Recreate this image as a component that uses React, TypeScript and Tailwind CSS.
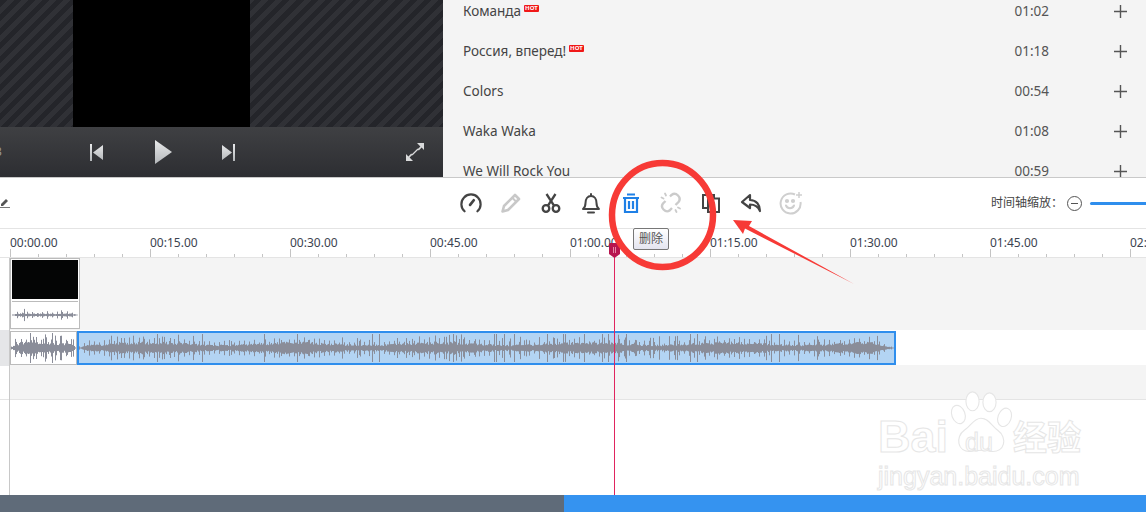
const songs = [
  { name: "Команда", time: "01:02", hot: true },
  { name: "Россия, вперед!", time: "01:18", hot: true },
  { name: "Colors", time: "00:54", hot: false },
  { name: "Waka Waka", time: "01:08", hot: false },
  { name: "We Will Rock You", time: "00:59", hot: false },
];

const rulerLabels = ["00:00.00", "00:15.00", "00:30.00", "00:45.00", "01:00.00", "01:15.00", "01:30.00", "01:45.00", "02:00.00"];

function noise(i: number, seed: number) {
  const v = Math.sin(i * 12.9898 + seed * 78.233) * 43758.5453;
  return v - Math.floor(v);
}

function Wave({ width, height, seed, gain = 1, fade = 0 }: { width: number; height: number; seed: number; gain?: number; fade?: number }) {
  const mid = height / 2;
  let d = "";
  for (let x = 0; x < width; x++) {
    const n = noise(x, seed);
    const slow = 0.8 + 0.25 * Math.sin(x / 23 + seed);
    let amp = (3.2 + n * 3) * slow;
    if (x % 5 === 0) amp += 2 + noise(x + 300, seed) * 3.5;
    if (noise(x + 500, seed) > 0.91) amp += 4 + noise(x + 900, seed) * 8;
    if (fade && x > width - fade) amp *= Math.max(0.1, (width - x) / fade);
    if (fade && x < 10) amp *= 0.2 + x / 12;
    amp = Math.min(amp * gain, mid - 1);
    d += `M${x + 0.5} ${(mid - amp).toFixed(1)}V${(mid + amp).toFixed(1)}`;
  }
  return (
    <svg width={width} height={height} className="block shrink-0">
      <path d={d} stroke="#8a8d99" strokeWidth="1" fill="none" />
    </svg>
  );
}

function ToolIcon({ children }: { children: React.ReactNode }) {
  return <div className="flex w-10 items-center justify-center">{children}</div>;
}

function Toolbar() {
  return (
    <div className="flex h-[51px] items-center border-b border-[#e4e4e4] bg-white">
      <svg width="11" height="11" viewBox="0 0 11 11" className="mt-[-1px] shrink-0">
        <path d="M1 7l5-5 2 2-5 5H1z" fill="#555" />
        <path d="M0 10.5h10" stroke="#777" />
      </svg>
      <div className="ml-[440px] flex">
        <ToolIcon>
          <svg width="22" height="22" viewBox="0 0 24 24" fill="none" stroke="#444" strokeWidth="2.400">
            <path d="M5 21a10.500 10.500 0 1 1 14 0" strokeLinecap="round" />
            <path d="M11 14l4-5" strokeWidth="3" strokeLinecap="round" />
          </svg>
        </ToolIcon>
        <ToolIcon>
          <svg width="22" height="22" viewBox="0 0 22 22" fill="none" stroke="#c8c8c8" strokeWidth="2.600">
            <path d="M2.500 19.500l1.500-5.500L15 3l4 4L8 18z" strokeLinejoin="round" />
            <path d="M12.500 6l3.500 3.500" strokeWidth="2" />
          </svg>
        </ToolIcon>
        <ToolIcon>
          <svg width="20" height="20" viewBox="0 0 20 20" fill="none" stroke="#444" strokeWidth="2.300">
            <circle cx="5" cy="15.500" r="3.300" />
            <circle cx="15" cy="15.500" r="3.300" />
            <path d="M6.800 12.800L14.500 1M13.200 12.800L5.500 1" />
          </svg>
        </ToolIcon>
        <ToolIcon>
          <svg width="20" height="21" viewBox="0 0 20 21" fill="none" stroke="#444" strokeWidth="2">
            <path d="M2 16c2-1.500 2.500-3 2.500-6 0-4 2-7 5.500-7s5.500 3 5.500 7c0 3 .5 4.500 2.500 6z" strokeLinejoin="round" />
            <path d="M10 1v2M7 19.500h6" strokeLinecap="round" />
          </svg>
        </ToolIcon>
        <ToolIcon>
          <svg width="16" height="20" viewBox="0 0 16 20" fill="none" stroke="#1f80e6" strokeWidth="2.200">
            <path d="M0 5h16M4 1.500h8M2 5v14h12V5M6 8v8M10 8v8" />
          </svg>
        </ToolIcon>
        <ToolIcon>
          <svg width="22" height="22" viewBox="0 0 22 22" fill="none" stroke="#cbcbcb" strokeWidth="2.400">
            <path d="M10 4.500l1.500-1.500c2-1.500 4.500-1.500 6.500.5s2 4.500.5 6.500l-3 3M5.500 9L3 11.500C1.500 13.500 2 16 3.500 17.500s4 2.500 6 1l2.500-2.500" />
            <path d="M5 1.500l1 2M1.500 5.500l2 1M18 15.500l2 1M15.500 18l1 2" strokeWidth="1.800" strokeLinecap="round" />
          </svg>
        </ToolIcon>
        <ToolIcon>
          <svg width="18" height="19" viewBox="0 0 18 19" fill="none" stroke="#444" strokeWidth="2">
            <path d="M5 14H1V1h11v3" />
            <path d="M6 4.500h11V18H6zM11.500 8v7" />
          </svg>
        </ToolIcon>
        <ToolIcon>
          <svg width="22" height="20" viewBox="0 0 22 20" fill="none" stroke="#444" strokeWidth="2.200">
            <path d="M10 2L2 9l8 6v-3.500c4.500 0 8 2 10 6.500 0-6-3.500-11-10-11z" strokeLinejoin="round" />
          </svg>
        </ToolIcon>
        <ToolIcon>
          <svg width="24" height="24" viewBox="0 0 24 24" fill="none" stroke="#cfcfcf" strokeWidth="2">
            <path d="M16 3.500A10 10 0 1 0 21.500 11" />
            <path d="M7 14.500c1.500 3.500 6.500 3.500 8 0" strokeLinecap="round" />
            <circle cx="8" cy="10" r="1.100" fill="#cfcfcf" />
            <circle cx="14" cy="10" r="1.100" fill="#cfcfcf" />
            <path d="M20 1v6M17 4h6" strokeWidth="1.500" />
          </svg>
        </ToolIcon>
      </div>
      <div className="ml-auto flex items-center">
        <span className="text-[12px] text-[#444]">时间轴缩放：</span>
        <span className="ml-[4px] flex h-[15px] w-[15px] items-center justify-center rounded-full border border-[#555]">
          <span className="h-px w-[7px] bg-[#555]" />
        </span>
        <span className="ml-2 h-[3px] w-[56px] rounded-l-full bg-[#2f8eed]" />
      </div>
    </div>
  );
}

function Ruler() {
  return (
    <div className="flex h-[29px] overflow-hidden border-b border-[#e4e4e4] bg-white pl-[10px]">
      {rulerLabels.map((label) => (
        <div key={label} className="relative h-full w-[140px] shrink-0">
          <span className="absolute top-[4px] left-0 text-[12px] leading-[20px] text-[#3c4350]">{label}</span>
          <div className="absolute bottom-0 left-0 flex w-full items-end">
            <div className="h-[8px] w-[28px] border-l border-[#c4c4c4]" />
            <div className="h-[3px] w-[28px] border-l border-[#c4c4c4]" />
            <div className="h-[3px] w-[28px] border-l border-[#c4c4c4]" />
            <div className="h-[3px] w-[28px] border-l border-[#c4c4c4]" />
            <div className="h-[3px] w-[28px] border-l border-[#c4c4c4]" />
          </div>
        </div>
      ))}
    </div>
  );
}

function Tracks() {
  return (
    <div className="flex h-[237px]">
      <div className="flex w-[10px] shrink-0 flex-col border-r border-[#c8c8c8]">
        <div className="h-[72px] bg-white" />
        <div className="h-[36px] bg-[#e5e6e8]" />
        <div className="h-[34px] border-b border-[#e4e4e4] bg-white" />
      </div>
      <div className="flex min-w-0 flex-1 flex-col">
        <div className="h-[72px] bg-[#f4f4f4]">
          <div className="flex h-[71px] w-[70px] flex-col border border-[#bbb] bg-white px-px pt-px">
            <div className="h-[39px] bg-[#040505]" />
            <div className="mt-[2px] flex-1 border-t border-[#bbb]">
              <Wave width={66} height={26} seed={3} gain={0.45} fade={8} />
            </div>
          </div>
        </div>
        <div className="flex h-[35px] bg-white pt-px">
          <div className="h-[34px] w-[67px] border border-[#bbb] bg-white">
            <Wave width={65} height={32} seed={7} gain={1} fade={4} />
          </div>
          <div className="h-[34px] w-[819px] border-2 border-[#2f8eed] bg-[#b3d4f3]">
            <Wave width={815} height={30} seed={11} gain={1} fade={24} />
          </div>
        </div>
        <div className="h-[35px] border-b border-[#e4e4e4] bg-[#f4f4f4]" />
        <div className="flex-1 bg-white" />
      </div>
    </div>
  );
}

function Player() {
  return (
    <div className="flex w-[443px] shrink-0 flex-col">
      <div className="h-[127px] bg-[repeating-linear-gradient(135deg,#24252a_0,#24252a_5px,#303136_5px,#303136_10px)] pl-[73px]">
        <div className="h-full w-[177px] bg-black" />
      </div>
      <div className="flex h-[50px] items-center bg-gradient-to-b from-[#3f4043] to-[#2d2e32]">
        <span className="ml-[-5px] text-[12px] text-[#9a9a9a]">3</span>
        <svg width="13" height="17" viewBox="0 0 13 17" className="ml-[88px]">
          <path d="M0 0h2v17H0zM13 1v15L3 8.500z" fill="url(#btn)" />
        </svg>
        <svg width="17" height="24" viewBox="0 0 17 24" className="ml-[52px]">
          <defs>
            <linearGradient id="btn" x1="0" y1="0" x2="0" y2="1">
              <stop offset="0" stopColor="#e8e9ea" />
              <stop offset="1" stopColor="#b4b7ba" />
            </linearGradient>
          </defs>
          <path d="M0 0l17 12L0 24z" fill="url(#btn)" />
        </svg>
        <svg width="13" height="17" viewBox="0 0 13 17" className="ml-[50px]">
          <path d="M11 0h2v17h-2zM0 1v15l10-7.500z" fill="url(#btn)" />
        </svg>
        <svg width="18" height="18" viewBox="0 0 18 18" className="ml-[171px]" fill="#d9dadb">
          <path d="M11 0h7v7l-2.400-2.400-2.800 2.800-1.200-1.200 2.800-2.800zM0 18v-7l2.400 2.400 2.800-2.800 1.200 1.200-2.800 2.800L7 18z" />
          <path d="M6 12l6-6" stroke="#d9dadb" strokeWidth="1.200" />
        </svg>
      </div>
    </div>
  );
}

function SongList() {
  return (
    <div className="h-full min-w-0 flex-1 overflow-hidden bg-[#f4f4f4]">
      <div className="mt-[-9px]">
        {songs.map((song) => (
          <div key={song.name} className="flex h-10 items-center pr-[19px] pl-[20px] text-[13.5px] text-[#444]">
            <span>{song.name}</span>
            {song.hot && (
              <span className="mb-[5px] ml-[3px] rounded-[1px] bg-[#f01818] px-px text-[6px] leading-[7px] font-bold text-white">HOT</span>
            )}
            <span className="ml-auto text-[#555]">{song.time}</span>
            <svg width="13" height="13" viewBox="0 0 13 13" className="ml-[65px]" stroke="#555" strokeWidth="1.400">
              <path d="M6.500 0v13M0 6.500h13" />
            </svg>
          </div>
        ))}
      </div>
    </div>
  );
}

function Watermark() {
  return (
    <div className="pointer-events-none absolute top-[388px] left-[878px] h-[104px] w-[212px] font-['Liberation_Sans',sans-serif]">
      <svg width="66" height="70" viewBox="0 0 70 70" className="absolute top-0 left-[70px]" fill="#fff" stroke="#e6e6e6" strokeWidth="1.200">
        <ellipse cx="26" cy="12" rx="7" ry="10" />
        <ellipse cx="44" cy="13" rx="7" ry="10" />
        <ellipse cx="11" cy="26" rx="7" ry="10" transform="rotate(-20 11 26)" />
        <ellipse cx="60" cy="29" rx="7" ry="10" transform="rotate(20 60 29)" />
        <path d="M35 30c-8 0-10 8-18 13-9 6-8 24 8 22 6-1 14-2 20 0 16 2 18-15 8-22-7-5-10-13-18-13z" />
      </svg>
      <span className="absolute top-[24px] left-0 text-[45px] leading-[50px] font-bold text-white [-webkit-text-stroke:1px_#e6e6e6]">Bai</span>
      <span className="absolute top-[39px] left-[87px] text-[25px] leading-[30px] text-white [-webkit-text-stroke:1px_#e6e6e6]">du</span>
      <span className="absolute top-[28px] left-[135px] font-['Noto_Sans_CJK_SC',sans-serif] text-[34px] leading-[40px] font-bold text-white [-webkit-text-stroke:1px_#e6e6e6]">经验</span>
      <span className="absolute top-[73px] left-0 text-[25px] leading-[30px] text-white [-webkit-text-stroke:1px_#e6e6e6]">jingyan.baidu.com</span>
    </div>
  );
}

export default function App() {
  return (
    <div className="relative h-[512px] w-[1146px] overflow-hidden bg-white font-['Noto_Sans','Noto_Sans_CJK_SC',sans-serif]">
      <div className="flex h-[178px] border-b border-[#c9c9c9]">
        <Player />
        <SongList />
      </div>
      <Toolbar />
      <Ruler />
      <Tracks />
      <div className="flex h-[17px]">
        <div className="w-[564px] bg-[#5f6b79]" />
        <div className="flex-1 bg-[#3593f0]" />
      </div>

      <Watermark />

      {/* playhead */}
      <div className="absolute top-[257px] left-[614px] h-[238px] w-px bg-[#e0245e]" />
      <svg width="11" height="15" viewBox="0 0 11 15" className="absolute top-[243px] left-[609px]">
        <path d="M1 0h9l1 1v10l-5.500 4L0 11V1z" fill="#b7154f" />
        <path d="M4.500 4v6M6.500 4v6" stroke="#e58aa8" />
      </svg>

      {/* tooltip */}
      <div className="absolute top-[228px] left-[633px] flex h-[22px] w-[36px] items-center justify-center rounded-[2px] border border-[#777] bg-gradient-to-b from-white to-[#e4e5f0] text-[12px] text-[#555]">
        删除
      </div>

      {/* annotation */}
      <svg width="1146" height="512" className="pointer-events-none absolute top-0 left-0">
        <ellipse cx="662.500" cy="215" rx="50.500" ry="52" fill="none" stroke="#f73a36" strokeWidth="6.500" />
        <path d="M733 220L752 221L749 226L854 284L745 228.500L743 234z" fill="#f73a36" />
      </svg>
    </div>
  );
}
